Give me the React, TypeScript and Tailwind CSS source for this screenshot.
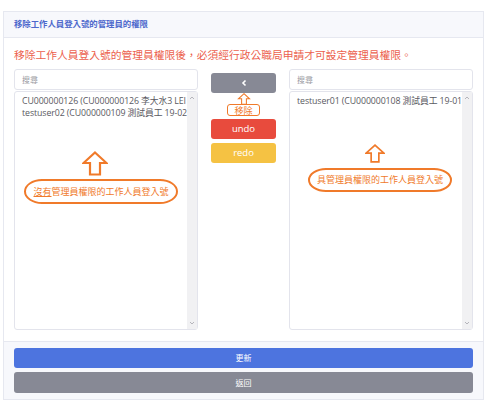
import React from 'react';

const font = { fontFamily: '"Open Sans", "Noto Sans CJK TC", sans-serif' };

function UpArrow({ w, h }: { w: number; h: number }) {
  return (
    <svg width={w} height={h} viewBox="0 0 26 25" className="block">
      <polygon
        points="13,1.5 24.5,12 18,12 18,23.5 8,23.5 8,12 1.5,12"
        fill="white"
        stroke="#f07a2a"
        strokeWidth={2.2}
        strokeLinejoin="miter"
      />
    </svg>
  );
}

function Scrollbar() {
  return (
    <div className="flex w-[10px] flex-col justify-between bg-[#f1f1f3] py-[2px] text-[#b5b5bb]">
      <svg width="10" height="8" viewBox="0 0 10 8">
        <path d="M3 5 L5 3 L7 5" fill="none" stroke="currentColor" strokeWidth="1" />
      </svg>
      <svg width="10" height="8" viewBox="0 0 10 8">
        <path d="M3 3 L5 5 L7 3" fill="none" stroke="currentColor" strokeWidth="1" />
      </svg>
    </div>
  );
}

function SearchBox() {
  return (
    <div className="flex h-[21px] items-center rounded-[3px] border border-[#e3e4ec] bg-white px-[7px] text-[8px] text-[#9a9aa2]">
      搜尋
    </div>
  );
}

export default function App() {
  return (
    <div className="h-[403px] w-[487px] bg-white px-[3px] pt-[11px]" style={font}>
      <div className="border-x border-t border-[#e6e8f0]">
        {/* header */}
        <div className="flex h-[26px] items-center border-b border-[#e6e8f0] bg-[#f7f8fc] px-[10px] text-[8.4px] font-semibold text-[#4d68cc]">
          移除工作人員登入號的管理員的權限
        </div>

        <div className="px-[10px] pb-[11px] pt-[9px]">
          <p className="text-[10.75px] leading-[16px] text-[#ec5f4e]">
            移除工作人員登入號的管理員權限後，必須經行政公職局申請才可設定管理員權限。
          </p>

          <div className="mt-[6px] flex gap-[13px]">
            {/* left */}
            <div className="flex w-[184px] flex-col gap-[1px]">
              <SearchBox />
              <div className="relative flex h-[239px] rounded-[3px] border border-[#e3e4ec] bg-white">
                <div className="flex-1 overflow-hidden whitespace-nowrap px-[7px] pt-[3px] text-[8.8px] leading-[12px] tracking-[-0.1px] text-[#5a5a62]">
                  <div>CU000000126 (CU000000126 李大水3 LEI</div>
                  <div>testuser02 (CU000000109 測試員工 19-02</div>
                </div>
                <Scrollbar />
                <div className="absolute left-[67px] top-[59px]">
                  <UpArrow w={26} h={25} />
                </div>
                <div className="absolute left-[9px] top-[87px] flex h-[25px] w-[154px] items-center justify-center rounded-[18px/50%] border-2 border-[#f07a2a] bg-white text-[9px] text-[#f07a2a]">
                  <span className="underline">沒有</span>管理員權限的工作人員登入號
                </div>
              </div>
            </div>

            {/* middle */}
            <div className="flex w-[67px] flex-col pt-[4px]">
              <button className="flex h-[20px] items-center justify-center rounded-[3px] bg-[#878995] text-white">
                <svg width="8" height="8" viewBox="0 0 8 8">
                  <path d="M5.5 1.5 L3 4 L5.5 6.5" fill="none" stroke="white" strokeWidth="1.6" />
                </svg>
              </button>
              <div className="flex flex-col items-center">
                <UpArrow w={14} h={12} />
                <div className="-mt-[1px] flex h-[12px] w-[33px] items-center justify-center rounded-[3px] border-[1.5px] border-[#f07a2a] bg-white text-[9px] leading-none text-[#f07a2a]">
                  移除
                </div>
              </div>
              <button className="mt-[3px] flex h-[20px] items-center justify-center rounded-[3px] bg-[#e84b3d] text-[9.5px] text-white">
                undo
              </button>
              <button className="mt-[4px] flex h-[20px] items-center justify-center rounded-[3px] bg-[#f5c243] text-[9.5px] text-white">
                redo
              </button>
            </div>

            {/* right */}
            <div className="flex w-[184px] flex-col gap-[1px]">
              <SearchBox />
              <div className="relative flex h-[239px] rounded-[3px] border border-[#e3e4ec] bg-white">
                <div className="flex-1 overflow-hidden whitespace-nowrap px-[7px] pt-[3px] text-[8.8px] leading-[12px] tracking-[-0.1px] text-[#5a5a62]">
                  <div>testuser01 (CU000000108 測試員工 19-01</div>
                </div>
                <Scrollbar />
                <div className="absolute left-[75px] top-[50px]">
                  <UpArrow w={20} h={23} />
                </div>
                <div className="absolute left-[18px] top-[76px] flex h-[24px] w-[144px] items-center justify-center rounded-[18px/50%] border-2 border-[#f07a2a] bg-white text-[9px] text-[#f07a2a]">
                  具管理員權限的工作人員登入號
                </div>
              </div>
            </div>
          </div>
        </div>

        {/* footer */}
        <div className="flex flex-col gap-[4px] border-y border-[#e6e8f0] bg-[#f7f8fc] px-[10px] py-[6px]">
          <button className="flex h-[20px] items-center justify-center rounded-[3px] bg-[#4d74df] text-[8px] text-white">
            更新
          </button>
          <button className="flex h-[21px] items-center justify-center rounded-[3px] bg-[#878995] text-[8px] text-white">
            返回
          </button>
        </div>
      </div>
    </div>
  );
}
